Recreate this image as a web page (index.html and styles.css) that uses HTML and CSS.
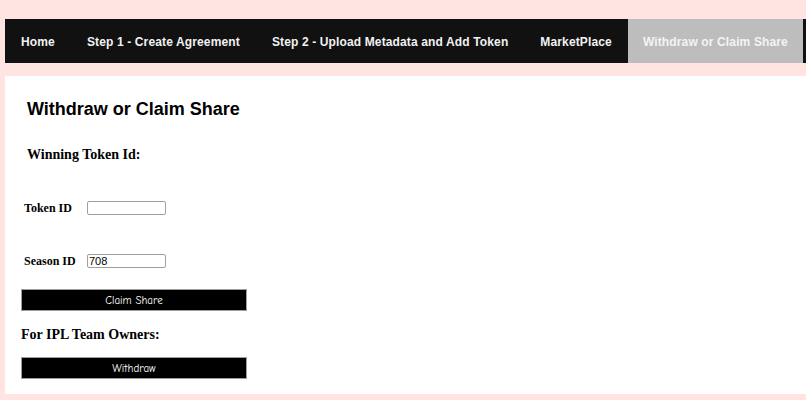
FILE: index.html
```html
<!DOCTYPE html>
<html lang="en">
<head>
<meta charset="utf-8">
<title>Withdraw or Claim Share</title>
<link rel="stylesheet" href="styles.css">
</head>
<body>
<nav class="topnav">
  <a href="#" class="nav-item">Home</a>
  <a href="#" class="nav-item">Step 1 - Create Agreement</a>
  <a href="#" class="nav-item">Step 2 - Upload Metadata and Add Token</a>
  <a href="#" class="nav-item">MarketPlace</a>
  <a href="#" class="nav-item active">Withdraw or Claim Share</a>
</nav>
<main class="content">
  <h2 class="title">Withdraw or Claim Share</h2>
  <h3 class="subtitle">Winning Token Id:</h3>
  <div class="field field-token">
    <label class="field-label" for="token">Token ID</label>
    <input class="field-input" id="token" type="text" value="">
  </div>
  <div class="field field-season">
    <label class="field-label" for="season">Season ID</label>
    <input class="field-input" id="season" type="text" value="708">
  </div>
  <button class="action-btn claim-btn" type="button">Claim Share</button>
  <h3 class="owners">For IPL Team Owners:</h3>
  <button class="action-btn withdraw-btn" type="button">Withdraw</button>
</main>
</body>
</html>
```
FILE: styles.css
```css
html, body {
  margin: 0;
  padding: 0;
}
body {
  background: #ffe4e1;
  padding: 19px 0 7px 5px;
  font-family: "Liberation Serif", "Times New Roman", serif;
  font-size: 12px;
  overflow: hidden;
}
.topnav {
  display: flex;
  background: #111111;
  height: 44px;
}
.nav-item {
  display: flex;
  align-items: center;
  padding: 1px 16px 0;
  color: #f2f2f2;
  text-decoration: none;
  font-family: "Liberation Sans", Arial, sans-serif;
  font-weight: bold;
  font-size: 12px;
  letter-spacing: 0.135px;
  white-space: nowrap;
}
.nav-item.active {
  background: #bdbdbd;
  color: #f4f4f4;
  padding: 1px 15px 0;
}
.content {
  margin-top: 13px;
  background: #ffffff;
  padding: 23px 0 15px 0;
  display: flex;
  flex-direction: column;
  align-items: flex-start;
}
.title {
  margin: 0 0 0 22px;
  font-family: "Liberation Sans", Arial, sans-serif;
  font-size: 18px;
  line-height: 21px;
  font-weight: bold;
  color: #000;
}
.subtitle {
  margin: 27px 0 0 22px;
  font-size: 14px;
  line-height: 16px;
  font-weight: bold;
}
.field {
  display: flex;
  align-items: center;
  height: 16px;
  margin-left: 19px;
}
.field-token {
  margin-top: 37px;
}
.field-season {
  margin-top: 37px;
}
.field-label {
  width: 63px;
  font-weight: bold;
  font-size: 12px;
}
.field-input {
  box-sizing: border-box;
  width: 79px;
  height: 14px;
  margin: 0;
  padding: 0 1px;
  border: 1px solid #a0a0a0;
  border-radius: 2px;
  font-family: "Liberation Sans", Arial, sans-serif;
  font-size: 11px;
  color: #000;
  background: #fff;
}
.action-btn {
  box-sizing: border-box;
  width: 226px;
  height: 22px;
  margin: 0 0 0 16px;
  padding: 0;
  background: #000;
  color: #fff;
  border: 1px solid #9e9e9e;
  font-family: "Comic Sans MS", "Comic Neue", "DejaVu Sans", cursive;
  font-size: 11px;
}
.claim-btn {
  margin-top: 20px;
}
.owners {
  margin: 16px 0 0 16px;
  font-size: 14px;
  line-height: 16px;
  font-weight: bold;
}
.withdraw-btn {
  margin-top: 14px;
}
```
